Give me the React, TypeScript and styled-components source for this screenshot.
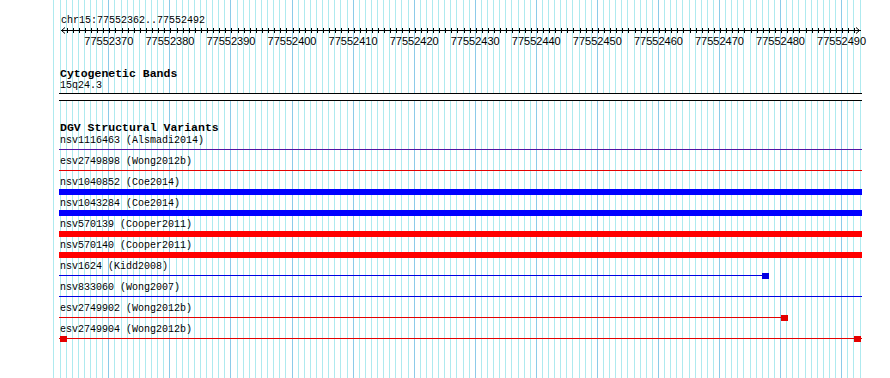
import React from 'react';
import styled, { createGlobalStyle } from 'styled-components';

const START = 77552362;
const END = 77552492;
const LEFT = 60;
const BP = 800 / (END - START + 1);
const ORIGIN = 59;
const TRACK_W = 803;

const xAt = (k: number) => LEFT + k * BP;

type Variant = {
  name: string;
  color: string;
  thick?: boolean;
  endAt?: number;
  both?: boolean;
};

const variants: Variant[] = [
  { name: 'nsv1116463 (Alsmadi2014)', color: '#5212a4' },
  { name: 'esv2749898 (Wong2012b)', color: '#e40000' },
  { name: 'nsv1040852 (Coe2014)', color: '#0000ff', thick: true },
  { name: 'nsv1043284 (Coe2014)', color: '#0000ff', thick: true },
  { name: 'nsv570139 (Cooper2011)', color: '#ff0000', thick: true },
  { name: 'nsv570140 (Cooper2011)', color: '#ff0000', thick: true },
  { name: 'nsv1624 (Kidd2008)', color: '#0000e4', endAt: 762 },
  { name: 'nsv833060 (Wong2007)', color: '#0000e4' },
  { name: 'esv2749902 (Wong2012b)', color: '#e40000', endAt: 781 },
  { name: 'esv2749904 (Wong2012b)', color: '#e40000', both: true },
];

const GlobalStyle = createGlobalStyle`
  html, body {
    margin: 0;
    padding: 0;
    background: #fff;
  }
`;

const Canvas = styled.div`
  position: relative;
  width: 890px;
  height: 378px;
  overflow: hidden;
  background: #fff;
`;

const GridSvg = styled.svg`
  position: absolute;
  left: 0;
  top: 0;
  z-index: 0;
`;

const Tracks = styled.div`
  position: relative;
  z-index: 1;
  width: ${TRACK_W}px;
  padding-left: ${ORIGIN}px;
  display: flex;
  flex-direction: column;
  font-family: 'Liberation Mono', 'DejaVu Sans Mono', monospace;
  color: #000;
`;

const Position = styled.div`
  margin-top: 15px;
  padding-left: 2px;
  font-size: 10px;
  line-height: 11px;
  height: 11px;
`;

const RulerSvg = styled.svg`
  display: block;
`;

const Numbers = styled.div`
  display: flex;
  height: 12px;
  padding-left: ${xAt(8) - BP * 5 - ORIGIN}px;
  font-family: 'Liberation Sans', Arial, sans-serif;
  font-size: 11px;
  line-height: 12px;
`;

const Num = styled.span`
  flex: 0 0 ${BP * 10}px;
  text-align: center;
  white-space: nowrap;
`;

const TrackTitle = styled.div<{ $gap: number }>`
  margin-top: ${(p) => p.$gap}px;
  padding-left: 1px;
  font-size: 11.5px;
  font-weight: bold;
  line-height: 12px;
  height: 12px;
`;

const ItemLabel = styled.div`
  padding-left: 1px;
  font-size: 10px;
  line-height: 11px;
  height: 11px;
  white-space: nowrap;
`;

const BandBox = styled.div`
  margin-top: 2px;
  height: 6px;
  border-top: 1px solid #000;
  border-bottom: 1px solid #000;
  background: #fff;
`;

const Row = styled.div`
  display: flex;
  flex-direction: column;
  height: 21px;
`;

const Feature = styled.div`
  margin-top: 1px;
  height: 6px;
  display: flex;
  align-items: flex-start;
`;

const Thin = styled.div<{ $color: string }>`
  margin-top: 2px;
  height: 1px;
  flex: 0 0 auto;
  background: ${(p) => p.$color};
`;

const Thick = styled.div<{ $color: string }>`
  height: 6px;
  width: 100%;
  background: ${(p) => p.$color};
`;

const EndBox = styled.div<{ $color: string }>`
  flex: 0 0 7px;
  height: 6px;
  background: ${(p) => p.$color};
`;

const Grid: React.FC = () => {
  const lines = [];
  for (let k = -1; k <= END - START + 1; k++) {
    const x = Math.floor(xAt(k));
    const major = (START + k) % 10 === 0;
    lines.push(
      <rect key={k} x={x} y={0} width={1} height={378} fill={major ? '#8ccbe9' : '#aeeaef'} />
    );
  }
  return (
    <GridSvg width={890} height={378} shapeRendering='crispEdges'>
      {lines}
    </GridSvg>
  );
};

const Ruler: React.FC = () => {
  const ticks = [];
  for (let k = 1; k <= END - START; k++) {
    const x = Math.floor(xAt(k)) - ORIGIN + 1;
    if (x < 7 || x > 796) continue;
    ticks.push(<rect key={k} x={x} y={2} width={1} height={5} fill='#000' />);
  }
  return (
    <RulerSvg width={TRACK_W} height={9}>
      <g shapeRendering='crispEdges'>
        <rect x={2} y={4} width={800} height={1} fill='#000' />
        {ticks}
      </g>
      <path d='M6 1.5 L2.5 4.5 L6 7.5' fill='none' stroke='#000' strokeWidth={1} />
      <path d='M797 1.5 L800.5 4.5 L797 7.5' fill='none' stroke='#000' strokeWidth={1} />
    </RulerSvg>
  );
};

const FeatureGlyph: React.FC<{ v: Variant }> = ({ v }) => {
  if (v.thick) {
    return (
      <Feature>
        <Thick $color={v.color} />
      </Feature>
    );
  }
  if (v.both) {
    return (
      <Feature>
        <Thin $color={v.color} style={{ width: 1 }} />
        <EndBox $color={v.color} />
        <Thin $color={v.color} style={{ flex: '1 1 auto' }} />
        <EndBox $color={v.color} />
        <Thin $color={v.color} style={{ width: 1 }} />
      </Feature>
    );
  }
  if (v.endAt) {
    return (
      <Feature>
        <Thin $color={v.color} style={{ width: v.endAt - ORIGIN }} />
        <EndBox $color={v.color} />
      </Feature>
    );
  }
  return (
    <Feature>
      <Thin $color={v.color} style={{ width: TRACK_W }} />
    </Feature>
  );
};

const App: React.FC = () => {
  const labels = [];
  for (let p = 77552370; p <= END; p += 10) labels.push(p);
  return (
    <Canvas>
      <GlobalStyle />
      <Grid />
      <Tracks>
        <Position>chr15:77552362..77552492</Position>
        <Ruler />
        <Numbers>
          {labels.map((p) => (
            <Num key={p}>{p}</Num>
          ))}
        </Numbers>

        <TrackTitle $gap={21}>Cytogenetic Bands</TrackTitle>
        <ItemLabel>15q24.3</ItemLabel>
        <BandBox />

        <TrackTitle $gap={21} style={{ marginBottom: 1 }}>
          DGV Structural Variants
        </TrackTitle>
        {variants.map((v) => (
          <Row key={v.name}>
            <ItemLabel>{v.name}</ItemLabel>
            <FeatureGlyph v={v} />
          </Row>
        ))}
      </Tracks>
    </Canvas>
  );
};

export default App;
